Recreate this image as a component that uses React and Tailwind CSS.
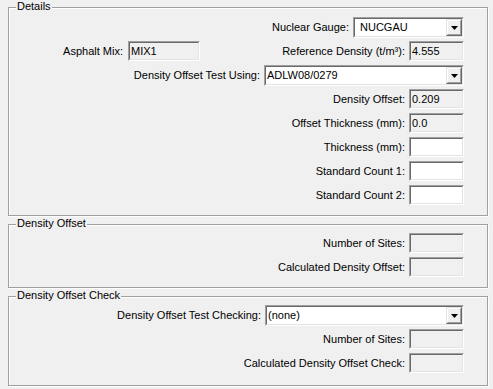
import React from "react";

const font = { fontFamily: '"Liberation Sans", Arial, sans-serif' };

function Sunken({ className = "", bg = "bg-[#f0f0f0]", children }) {
  return (
    <div className={`border border-t-[#a0a0a0] border-l-[#a0a0a0] border-b-white border-r-white ${className}`}>
      <div className={`h-full w-full border border-t-[#696969] border-l-[#696969] border-b-[#e3e3e3] border-r-[#e3e3e3] ${bg} flex items-center`}>
        {children}
      </div>
    </div>
  );
}

function TextBox({ value = "", editable = false, w = "w-[55px]" }) {
  return (
    <Sunken className={`${w} h-[20px]`} bg={editable ? "bg-white" : "bg-[#f0f0f0]"}>
      <span className="pl-[1px] leading-none text-black">{value}</span>
    </Sunken>
  );
}

function Combo({ value, w, pl = "pl-[1px]" }) {
  return (
    <Sunken className={`${w} h-[21px]`} bg="bg-white">
      <span className={`flex-1 ${pl} leading-none text-black`}>{value}</span>
      <div className="h-[17px] w-[16px] border border-t-[#e3e3e3] border-l-[#e3e3e3] border-b-[#696969] border-r-[#696969]">
        <div className="flex h-full w-full items-center justify-center border border-t-white border-l-white border-b-[#a0a0a0] border-r-[#a0a0a0] bg-[#f0f0f0]">
          <svg width="7" height="4" viewBox="0 0 7 4">
            <path d="M0 0H7L3.5 4Z" fill="#000" />
          </svg>
        </div>
      </div>
    </Sunken>
  );
}

function Label({ children }) {
  return <span className="whitespace-nowrap leading-none text-black">{children}</span>;
}

function Row({ label, children, className = "" }) {
  return (
    <div className={`flex items-center justify-end gap-[4px] pr-[23px] ${className}`}>
      <Label>{label}</Label>
      {children}
    </div>
  );
}

function Group({ title, className = "", children }) {
  return (
    <div className={`relative border border-[#a0a0a0] shadow-[inset_1px_1px_0_#fff,1px_1px_0_#fff] ${className}`}>
      <span className="absolute left-[7px] top-[-8px] bg-[#f0f0f0] px-[1px] leading-[13px] text-black">{title}</span>
      {children}
    </div>
  );
}

export default function App() {
  return (
    <div className="h-[389px] w-[493px] overflow-hidden bg-[#f0f0f0] pl-[8px] pr-[5px] pt-[7px] text-[11px]" style={font}>
      <Group title="Details" className="flex flex-col pb-[10px] pt-[9px]">
        <Row label="Nuclear Gauge:">
          <Combo value="NUCGAU" w="w-[111px]" pl="pl-[5px]" />
        </Row>
        <div className="mt-[3px] flex items-center pr-[23px]">
          <div className="flex w-[191px] items-center justify-end gap-[5px]">
            <Label>Asphalt Mix:</Label>
            <TextBox value="MIX1" w="w-[72px]" />
          </div>
          <div className="flex flex-1 items-center justify-end gap-[4px]">
            <Label>Reference Density (t/m³):</Label>
            <TextBox value="4.555" />
          </div>
        </div>
        <Row label="Density Offset Test Using:" className="mt-[4px]">
          <Combo value="ADLW08/0279" w="w-[200px]" />
        </Row>
        <Row label="Density Offset:" className="mt-[3px]">
          <TextBox value="0.209" />
        </Row>
        <Row label="Offset Thickness (mm):" className="mt-[4px]">
          <TextBox value="0.0" />
        </Row>
        <Row label="Thickness (mm):" className="mt-[4px]">
          <TextBox editable />
        </Row>
        <Row label="Standard Count 1:" className="mt-[4px]">
          <TextBox editable />
        </Row>
        <Row label="Standard Count 2:" className="mt-[4px]">
          <TextBox editable />
        </Row>
      </Group>

      <Group title="Density Offset" className="mt-[8px] flex flex-col pb-[10px] pt-[8px]">
        <Row label="Number of Sites:">
          <TextBox />
        </Row>
        <Row label="Calculated Density Offset:" className="mt-[4px]">
          <TextBox />
        </Row>
      </Group>

      <Group title="Density Offset Check" className="mt-[8px] flex flex-col pb-[12px] pt-[8px]">
        <Row label="Density Offset Test Checking:">
          <Combo value="(none)" w="w-[199px]" />
        </Row>
        <Row label="Number of Sites:" className="mt-[3px]">
          <TextBox />
        </Row>
        <Row label="Calculated Density Offset Check:" className="mt-[4px]">
          <TextBox />
        </Row>
      </Group>
    </div>
  );
}
